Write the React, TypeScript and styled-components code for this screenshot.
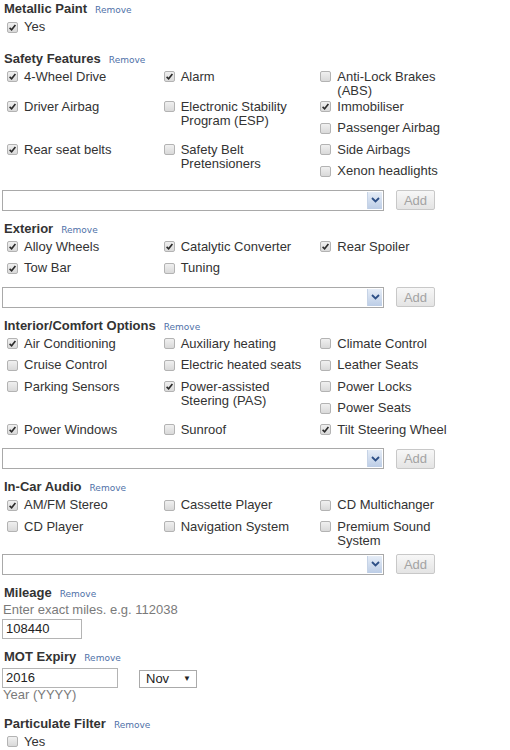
import { createGlobalStyle, styled } from "styled-components";

type Option = { label: string; checked?: boolean };

type OptionGroup = {
  title: string;
  options: Option[];
  picker?: boolean;
};

const groups: OptionGroup[] = [
  { title: "Metallic Paint", options: [{ label: "Yes", checked: true }] },
  {
    title: "Safety Features",
    picker: true,
    options: [
      { label: "4-Wheel Drive", checked: true },
      { label: "Alarm", checked: true },
      { label: "Anti-Lock Brakes (ABS)" },
      { label: "Driver Airbag", checked: true },
      { label: "Electronic Stability Program (ESP)" },
      { label: "Immobiliser", checked: true },
      { label: "Passenger Airbag" },
      { label: "Rear seat belts", checked: true },
      { label: "Safety Belt Pretensioners" },
      { label: "Side Airbags" },
      { label: "Xenon headlights" },
    ],
  },
  {
    title: "Exterior",
    picker: true,
    options: [
      { label: "Alloy Wheels", checked: true },
      { label: "Catalytic Converter", checked: true },
      { label: "Rear Spoiler", checked: true },
      { label: "Tow Bar", checked: true },
      { label: "Tuning" },
    ],
  },
  {
    title: "Interior/Comfort Options",
    picker: true,
    options: [
      { label: "Air Conditioning", checked: true },
      { label: "Auxiliary heating" },
      { label: "Climate Control" },
      { label: "Cruise Control" },
      { label: "Electric heated seats" },
      { label: "Leather Seats" },
      { label: "Parking Sensors" },
      { label: "Power-assisted Steering (PAS)", checked: true },
      { label: "Power Locks" },
      { label: "Power Seats" },
      { label: "Power Windows", checked: true },
      { label: "Sunroof" },
      { label: "Tilt Steering Wheel", checked: true },
    ],
  },
  {
    title: "In-Car Audio",
    picker: true,
    options: [
      { label: "AM/FM Stereo", checked: true },
      { label: "Cassette Player" },
      { label: "CD Multichanger" },
      { label: "CD Player" },
      { label: "Navigation System" },
      { label: "Premium Sound System" },
    ],
  },
];

const GlobalStyle = createGlobalStyle`
  body {
    margin: 0;
    background: #fff;
    color: #333;
    font-family: "Liberation Sans", Arial, sans-serif;
    font-size: 13px;
  }
`;

const Page = styled.div`
  width: 470px;
  padding: 0 2px;
`;

const Section = styled.section`
  margin-bottom: 9px;
`;

const Heading = styled.div`
  display: flex;
  align-items: baseline;
  gap: 8px;
  padding-left: 2px;
  line-height: 18px;
`;

const Title = styled.span`
  font-weight: bold;
  color: #333;
`;

const Remove = styled.a`
  font-family: "DejaVu Sans", Verdana, sans-serif;
  font-size: 9px;
  color: #4f71a8;
  text-decoration: none;
  cursor: pointer;
`;

// floats, so that short items slip into the gaps beside two-line items
const OptionList = styled.div`
  overflow: hidden;
`;

const OptionItem = styled.label`
  float: left;
  box-sizing: border-box;
  width: 33.333%;
  min-height: 21.5px;
  padding: 1px 4px 1px 5px;
  display: flex;
  align-items: flex-start;
  gap: 6px;
  line-height: 14px;
  color: #333;
`;

const Box = styled.span<{ $checked?: boolean }>`
  flex: none;
  box-sizing: border-box;
  width: 11px;
  height: 11px;
  margin-top: 1.5px;
  border: 1px solid #b3b3b3;
  border-radius: 2px;
  background: linear-gradient(#f0f0f0, #d9d9d9);
  display: flex;
  align-items: center;
  justify-content: center;
  svg {
    display: ${(p) => (p.$checked ? "block" : "none")};
  }
`;

const PickerRow = styled.div`
  display: flex;
  align-items: center;
  gap: 12px;
  margin-top: 5px;
`;

const Dropdown = styled.div`
  box-sizing: border-box;
  width: 382px;
  height: 21px;
  border: 1px solid #a9a9a9;
  display: flex;
  justify-content: flex-end;
  background: #fff;
`;

const DropArrow = styled.span`
  width: 14px;
  margin: 1px;
  border-left: 1px solid #c6d3e6;
  background: linear-gradient(#e6edf7, #bccde6);
  display: flex;
  align-items: center;
  justify-content: center;
`;

const AddButton = styled.button`
  box-sizing: border-box;
  width: 39px;
  height: 20px;
  padding: 0;
  border: 1px solid #c8c8c8;
  border-radius: 2px;
  background: linear-gradient(#f7f7f7, #e4e4e4);
  color: #a3a3a3;
  font-family: "Liberation Sans", Arial, sans-serif;
  font-size: 13px;
`;

const Hint = styled.div<{ $spaced?: boolean }>`
  color: #7a7a7a;
  line-height: ${(p) => (p.$spaced ? "14px" : "13px")};
  padding: 0 0 ${(p) => (p.$spaced ? "4px" : "0")} 1px;
`;

const FieldRow = styled.div<{ $top: number }>`
  display: flex;
  align-items: flex-end;
  gap: 21px;
  margin-top: ${(p) => p.$top}px;
`;

const TextInput = styled.div<{ $width: number }>`
  box-sizing: border-box;
  width: ${(p) => p.$width}px;
  height: 20px;
  padding: 0 3px;
  border: 1px solid #b4b4b4;
  line-height: 18px;
  color: #222;
`;

const MonthSelect = styled.div`
  box-sizing: border-box;
  width: 58px;
  height: 18px;
  padding: 0 5px 0 6px;
  border: 1px solid #aaa;
  display: flex;
  align-items: center;
  justify-content: space-between;
  line-height: 16px;
  color: #222;
  span {
    font-size: 8px;
  }
`;

const Check = () => (
  <svg width="9" height="9" viewBox="0 0 9 9">
    <path
      d="M1.6 4.9 L3.6 6.8 L7.4 2"
      fill="none"
      stroke="#2a2a2a"
      strokeWidth="1.6"
    />
  </svg>
);

const Checkbox = ({ label, checked }: Option) => (
  <OptionItem>
    <Box $checked={checked}>
      <Check />
    </Box>
    <span>{label}</span>
  </OptionItem>
);

const SectionHeading = ({ title }: { title: string }) => (
  <Heading>
    <Title>{title}</Title>
    <Remove>Remove</Remove>
  </Heading>
);

const Picker = () => (
  <PickerRow>
    <Dropdown>
      <DropArrow>
        <svg width="9" height="6" viewBox="0 0 9 6">
          <path
            d="M1 1 L4.5 4.5 L8 1"
            fill="none"
            stroke="#2d4f86"
            strokeWidth="1.8"
          />
        </svg>
      </DropArrow>
    </Dropdown>
    <AddButton>Add</AddButton>
  </PickerRow>
);

export default function App() {
  return (
    <Page>
      <GlobalStyle />
      {groups.map((g) => (
        <Section key={g.title}>
          <SectionHeading title={g.title} />
          <OptionList>
            {g.options.map((o) => (
              <Checkbox key={o.label} {...o} />
            ))}
          </OptionList>
          {g.picker && <Picker />}
        </Section>
      ))}

      <Section>
        <SectionHeading title="Mileage" />
        <Hint>Enter exact miles. e.g. 112038</Hint>
        <FieldRow $top={3}>
          <TextInput $width={80}>108440</TextInput>
        </FieldRow>
      </Section>

      <Section>
        <SectionHeading title="MOT Expiry" />
        <FieldRow $top={1}>
          <TextInput $width={116}>2016</TextInput>
          <MonthSelect>
            Nov<span>▼</span>
          </MonthSelect>
        </FieldRow>
        <Hint $spaced>Year (YYYY)</Hint>
      </Section>

      <Section>
        <SectionHeading title="Particulate Filter" />
        <OptionList>
          <Checkbox label="Yes" />
        </OptionList>
      </Section>
    </Page>
  );
}
